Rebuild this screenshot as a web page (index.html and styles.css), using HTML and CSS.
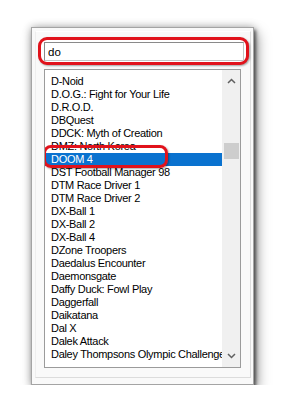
FILE: index.html
```html
<!DOCTYPE html>
<html>
	<head>
		<title>Busca de jogos</title>
		<meta charset="UTF-8">
		<meta name="viewport" content="width=device-width, initial-scale=1.0">
		<link rel="stylesheet" href="styles.css">
	</head>
	<body>
		<div class="window">
			<div class="frame">
				<div class="search-mark">
					<input type="text" class="search" value="do">
				</div>

				<div class="list">
					<ul class="items">
						<li>D-Noid</li>
						<li>D.O.G.: Fight for Your Life</li>
						<li>D.R.O.D.</li>
						<li>DBQuest</li>
						<li>DDCK: Myth of Creation</li>
						<li>DMZ: North Korea</li>
						<li class="selected">DOOM 4<span class="mark"></span></li>
						<li>DST Football Manager 98</li>
						<li>DTM Race Driver 1</li>
						<li>DTM Race Driver 2</li>
						<li>DX-Ball 1</li>
						<li>DX-Ball 2</li>
						<li>DX-Ball 4</li>
						<li>DZone Troopers</li>
						<li>Daedalus Encounter</li>
						<li>Daemonsgate</li>
						<li>Daffy Duck: Fowl Play</li>
						<li>Daggerfall</li>
						<li>Daikatana</li>
						<li>Dal X</li>
						<li>Dalek Attack</li>
						<li>Daley Thompsons Olympic Challenge</li>
					</ul>
					<div class="scrollbar">
						<div class="arrow">
							<svg width="9" height="6" viewBox="0 0 9 6"><polyline points="1,5 4.5,1.5 8,5" fill="none" stroke="#606060" stroke-width="1.5"/></svg>
						</div>
						<div class="thumb"></div>
						<div class="arrow bottom">
							<svg width="9" height="6" viewBox="0 0 9 6"><polyline points="1,1 4.5,4.5 8,1" fill="none" stroke="#606060" stroke-width="1.5"/></svg>
						</div>
					</div>
				</div>
			</div>
		</div>
	</body>
</html>
```

FILE: styles.css
```css
body {
	margin: 0;
	padding-top: 27px;
	background: #fff;
	display: flex;
	justify-content: center;
	font-family: "Liberation Sans", Arial, sans-serif;
}
.window {
	width: 223px;
	height: 358px;
	box-sizing: border-box;
	background: #f9f9f9;
	border: 1px solid #a4a4a4;
	padding: 3px 2px 6px 3px;
	box-shadow: 2px 3px 3px rgba(0,0,0,0.5), 4px 6px 12px rgba(0,0,0,0.35), 0 0 8px rgba(0,0,0,0.3);
}
.frame {
	height: 100%;
	box-sizing: border-box;
	border: 1px solid #dcdcdc;
	border-top-color: #fff;
	border-left-color: #eee;
	display: flex;
	flex-direction: column;
}
.search-mark {
	margin: 5px 1px 0 2px;
	height: 28px;
	box-sizing: border-box;
	border: 3px solid #e1121b;
	border-radius: 9px;
	padding: 2px 2px 1px 3px;
	background: #fff;
	box-shadow: 1px 1px 2px rgba(0,0,0,0.35);
}
.search {
	display: block;
	width: 100%;
	height: 19px;
	box-sizing: border-box;
	margin: 0;
	padding: 0 3px;
	border: 1px solid #8a8a8a;
	border-right-color: #c4c4c4;
	border-bottom-color: #c4c4c4;
	background: #fff;
	font-family: "Liberation Sans", Arial, sans-serif;
	font-size: 11.5px;
	color: #000;
	outline: none;
}
.list {
	margin: 4px 0 0 8px;
	width: 197px;
	height: 299px;
	box-sizing: border-box;
	border: 1px solid #9b9b9b;
	background: #fff;
	display: flex;
}
.items {
	flex: 1;
	min-width: 0;
	margin: 0;
	padding: 5px 0 0 0;
	list-style: none;
	overflow: hidden;
	font-size: 11px;
	letter-spacing: -0.3px;
	color: #000;
}
.items li {
	height: 13px;
	line-height: 13px;
	padding-left: 6px;
	white-space: nowrap;
}
.items li.selected {
	position: relative;
	background: #0a72cf;
	color: #fff;
}
.mark {
	position: absolute;
	left: -2px;
	top: -8px;
	width: 125px;
	height: 23px;
	box-sizing: border-box;
	border: 3px solid #e1121b;
	border-radius: 8px;
	box-shadow: 1px 1px 2px rgba(0,0,0,0.35);
	z-index: 1;
}
.scrollbar {
	width: 18px;
	background: #f0f0f0;
	display: flex;
	flex-direction: column;
	align-items: center;
}
.arrow {
	height: 22px;
	display: flex;
	align-items: center;
	justify-content: center;
}
.arrow.bottom {
	margin-top: auto;
}
.thumb {
	width: 15px;
	height: 16px;
	margin-top: 51px;
	background: #cdcdcd;
}
```
